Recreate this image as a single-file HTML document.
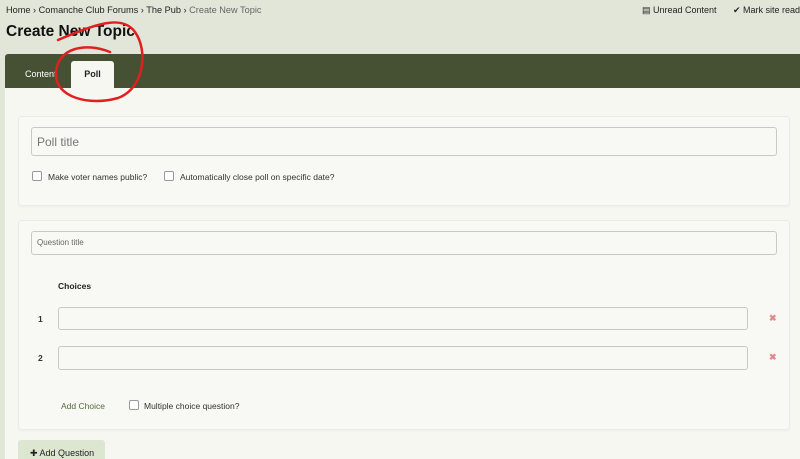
<!DOCTYPE html>
<html><head><meta charset="utf-8"><style>
*{box-sizing:border-box;margin:0;padding:0}
html,body{width:800px;height:459px;overflow:hidden}
body{background:#e2e6d9;font-family:"Liberation Sans",sans-serif;color:#222;position:relative}
.a{position:absolute}
.crumb{top:5px;left:6px;font-size:9.2px;color:#222;white-space:nowrap}
.crumb span{color:#666}
.h1{top:23px;left:6px;font-size:15.5px;font-weight:bold;color:#111}
.bar{top:54px;left:5px;width:795px;height:34px;background:#465134;border-radius:3px 0 0 0}
.tab{top:61px;left:71px;width:43px;height:27px;background:#f7f7f2;border-radius:3px 3px 0 0;font-size:9px;font-weight:bold;text-align:center;line-height:27px}
.panel{top:88px;left:5px;width:795px;height:371px;background:#f7f7f2}
.card{left:18px;width:772px;background:#f8f8f4;border:1px solid #ecece6;border-radius:3px;box-shadow:0 1px 2px rgba(0,0,0,.04)}
.inp{background:#f8f8f4;border:1px solid #c9c9c4;border-radius:3px}
.cb{width:10px;height:10px;border:1px solid #999;border-radius:2px;background:#fff}
.t{font-size:8.5px;color:#333;white-space:nowrap}
.x{color:#e08a8a;font-size:9px;font-weight:bold}
</style></head><body>
<div class="a crumb">Home › Comanche Club Forums › The Pub › <span>Create New Topic</span></div>
<div class="a" style="top:5px;left:642px;font-size:9px">▤ Unread Content</div>
<div class="a" style="top:5px;left:733px;font-size:9px;white-space:nowrap">✔ Mark site read</div>
<div class="a h1">Create New Topic</div>
<div class="a bar"></div>
<div class="a" style="top:69px;left:25px;font-size:9px;color:#fff">Content</div>
<div class="a tab">Poll</div>
<div class="a panel"></div>
<div class="a card" style="top:116px;height:90px"></div>
<div class="a inp" style="top:127px;left:31px;width:746px;height:29px"></div>
<div class="a" style="top:135px;left:37px;font-size:12px;color:#777">Poll title</div>
<div class="a cb" style="top:171px;left:32px"></div>
<div class="a t" style="top:172px;left:48px">Make voter names public?</div>
<div class="a cb" style="top:171px;left:164px"></div>
<div class="a t" style="top:172px;left:180px">Automatically close poll on specific date?</div>
<div class="a card" style="top:220px;height:210px"></div>
<div class="a inp" style="top:231px;left:31px;width:746px;height:24px"></div>
<div class="a" style="top:238px;left:37px;font-size:8px;color:#666">Question title</div>
<div class="a t" style="top:281px;left:58px;font-weight:bold;color:#222">Choices</div>
<div class="a t" style="top:314px;left:38px;font-weight:bold">1</div>
<div class="a inp" style="top:307px;left:58px;width:690px;height:23px"></div>
<div class="a x" style="top:313px;left:769px">✖</div>
<div class="a t" style="top:353px;left:38px;font-weight:bold">2</div>
<div class="a inp" style="top:346px;left:58px;width:690px;height:24px"></div>
<div class="a x" style="top:352px;left:769px">✖</div>
<div class="a t" style="top:401px;left:61px;color:#556a3a">Add Choice</div>
<div class="a cb" style="top:400px;left:129px"></div>
<div class="a t" style="top:401px;left:144px">Multiple choice question?</div>
<div class="a" style="top:440px;left:18px;width:87px;height:19px;background:#dde6d0;border-radius:3px 3px 0 0;font-size:9px;padding:8px 0 0 12px;color:#222">✚ Add Question</div>
<svg class="a" style="top:0;left:0" width="800" height="459"><path d="M110 52 C85 42,58 48,56 72 C54 98,90 106,118 98 C145 88,148 50,135 32 C122 14,96 24,58 40" fill="none" stroke="#e02020" stroke-width="2.5" stroke-linecap="round"/></svg>
</body></html>
